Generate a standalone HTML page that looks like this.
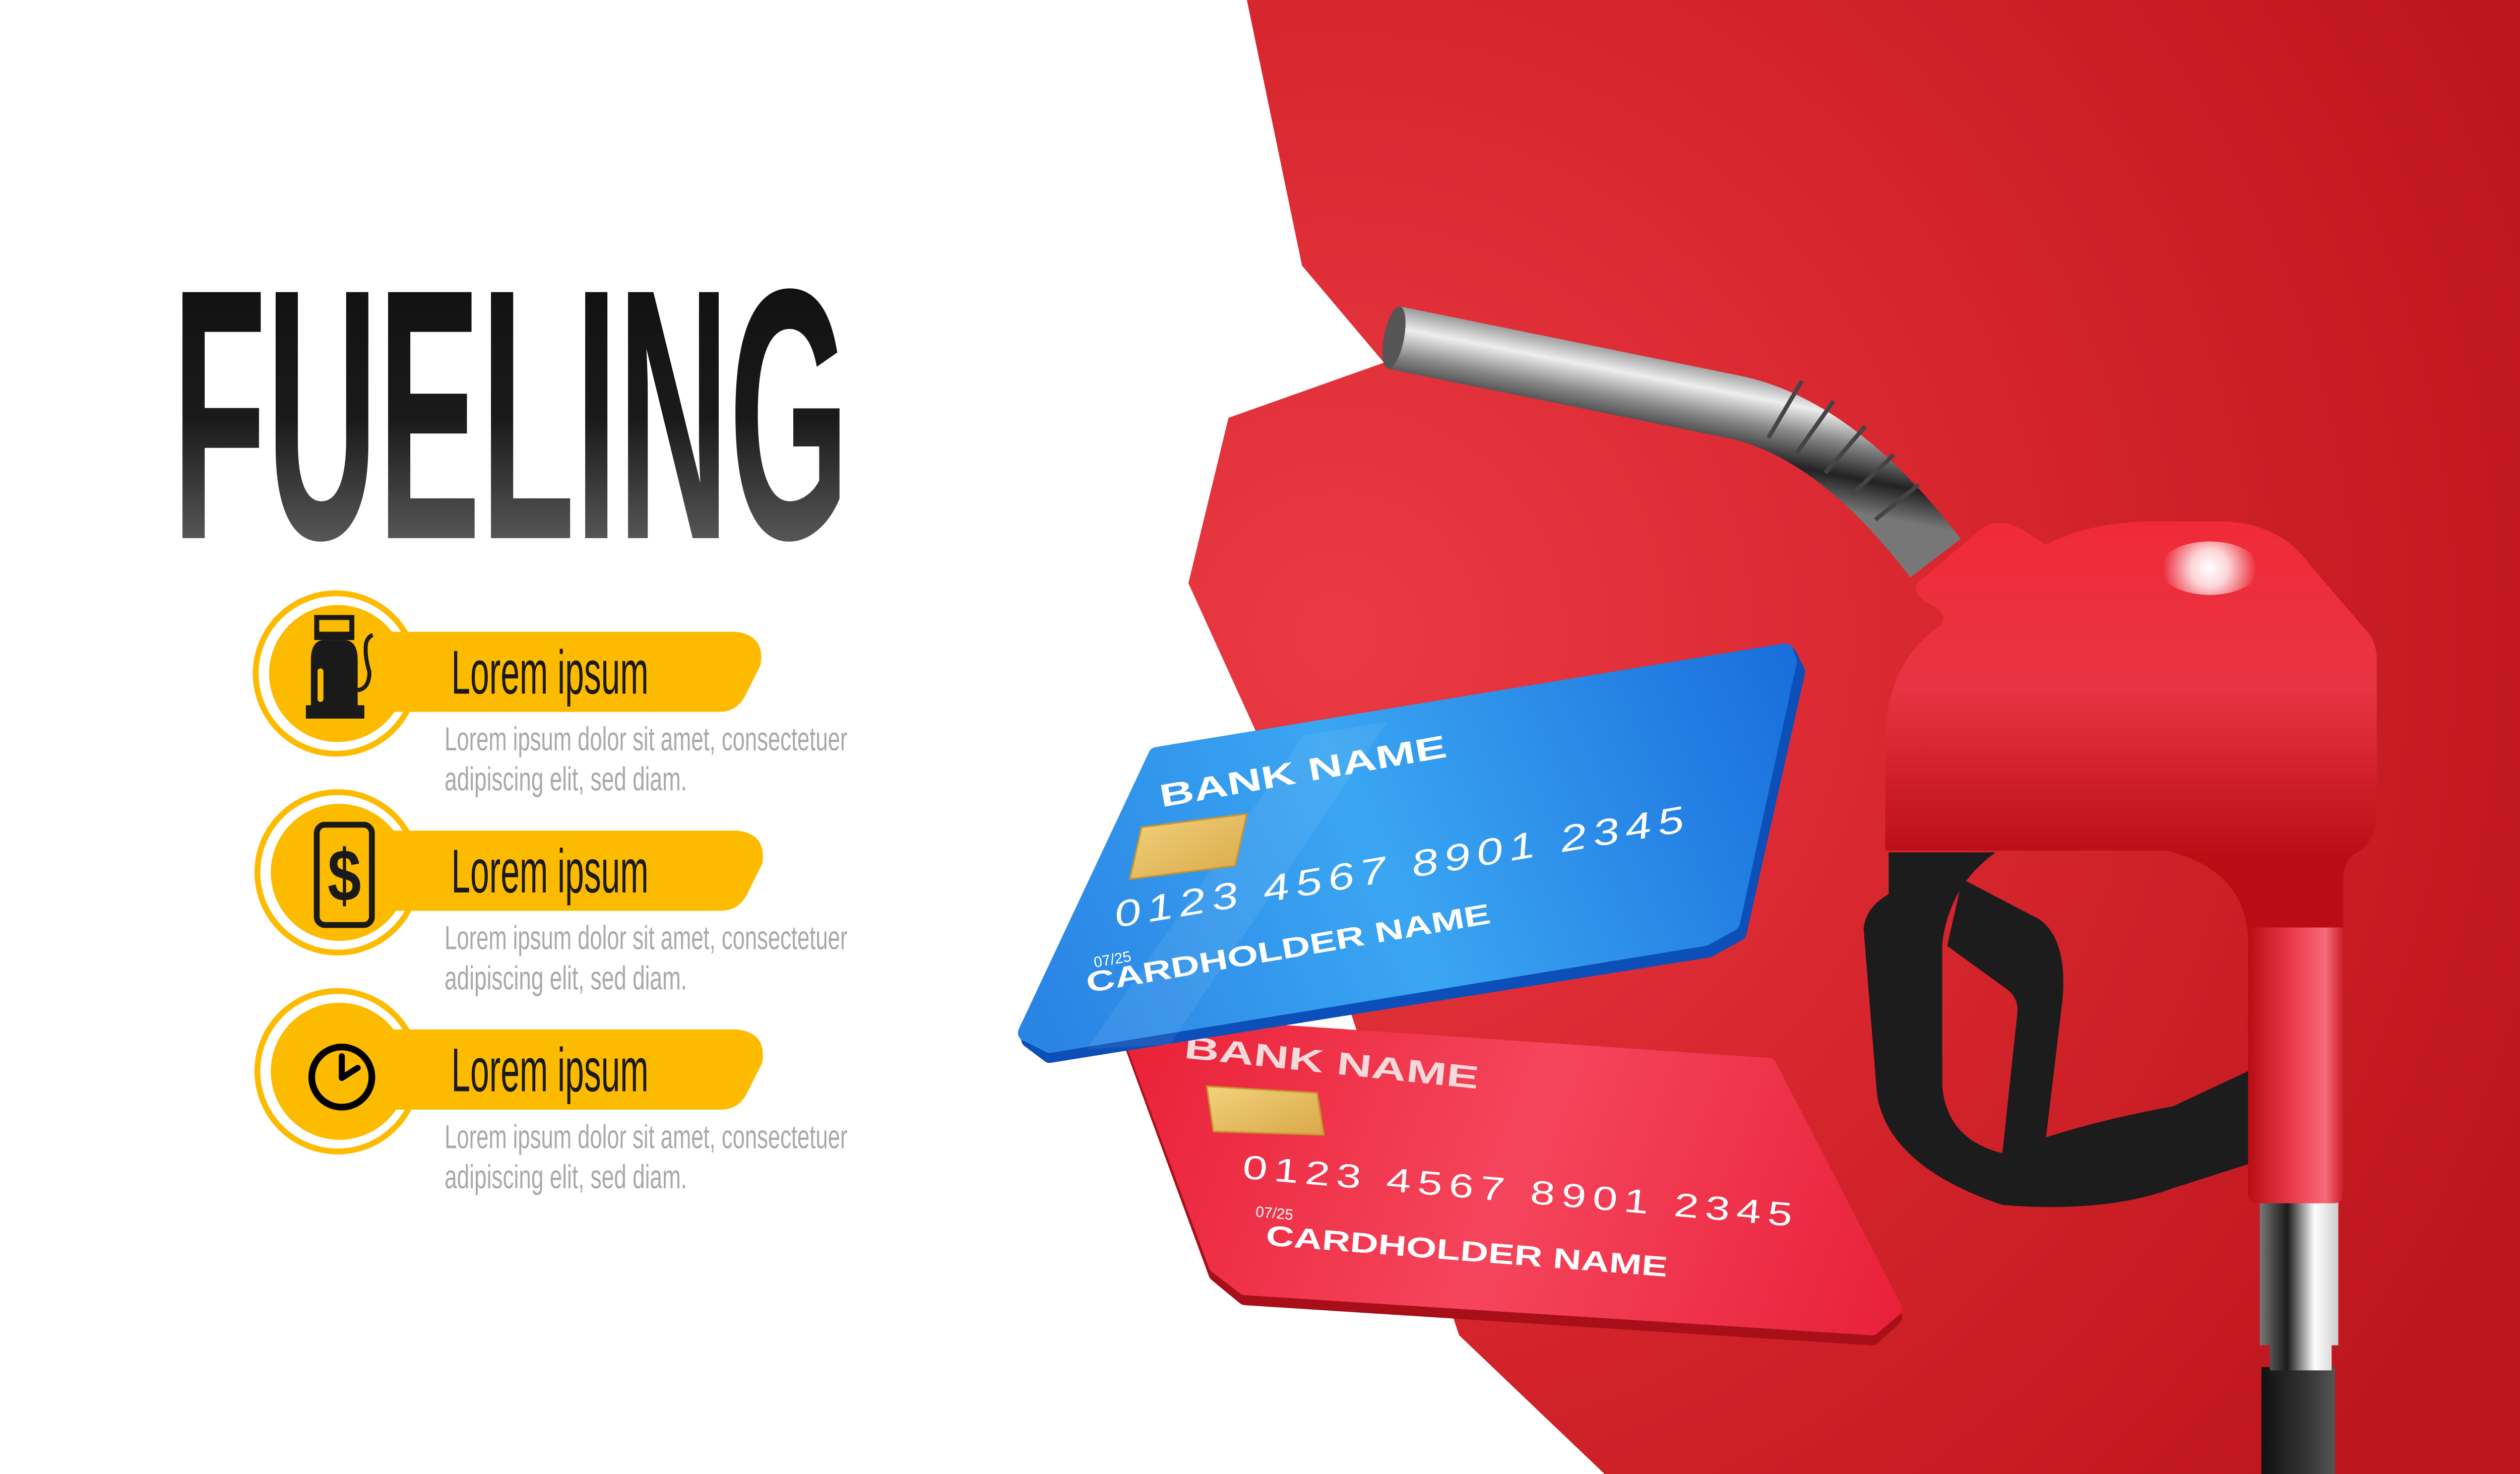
<!DOCTYPE html>
<html><head><meta charset="utf-8">
<style>html,body{margin:0;padding:0;background:#fff;overflow:hidden}svg{display:block}</style>
</head><body>
<svg width="5200" height="2925" viewBox="0 0 1568 882" preserveAspectRatio="none" xmlns="http://www.w3.org/2000/svg">
<defs>
<radialGradient id="bg" cx="800" cy="380" r="780" gradientUnits="userSpaceOnUse">
<stop offset="0" stop-color="#ea3a44"/><stop offset="0.5" stop-color="#d6252d"/><stop offset="1" stop-color="#bc161c"/></radialGradient>
<linearGradient id="title" x1="0" y1="165" x2="0" y2="322" gradientUnits="userSpaceOnUse">
<stop offset="0" stop-color="#111"/><stop offset="0.55" stop-color="#1a1a1a"/><stop offset="1" stop-color="#555"/></linearGradient>
<linearGradient id="blue" x1="620" y1="600" x2="1070" y2="400" gradientUnits="userSpaceOnUse">
<stop offset="0" stop-color="#2a84e4"/><stop offset="0.45" stop-color="#3aa6f2"/><stop offset="1" stop-color="#1a6fdc"/></linearGradient>
<linearGradient id="redc" x1="680" y1="620" x2="1130" y2="790" gradientUnits="userSpaceOnUse">
<stop offset="0" stop-color="#e92238"/><stop offset="0.5" stop-color="#f5455c"/><stop offset="1" stop-color="#e8223a"/></linearGradient>
<linearGradient id="pipe" x1="0" y1="185" x2="0" y2="265" gradientUnits="userSpaceOnUse" gradientTransform="rotate(11 900 220)">
<stop offset="0" stop-color="#555"/><stop offset="0.3" stop-color="#eee"/><stop offset="0.5" stop-color="#888"/><stop offset="0.75" stop-color="#222"/><stop offset="1" stop-color="#777"/></linearGradient>
<linearGradient id="body" x1="0" y1="310" x2="0" y2="515" gradientUnits="userSpaceOnUse">
<stop offset="0" stop-color="#f02a38"/><stop offset="0.5" stop-color="#e83442"/><stop offset="1" stop-color="#b80d14"/></linearGradient>
<linearGradient id="neck" x1="1345" y1="0" x2="1403" y2="0" gradientUnits="userSpaceOnUse">
<stop offset="0" stop-color="#b80d14"/><stop offset="0.5" stop-color="#ee4050"/><stop offset="0.8" stop-color="#f46a78"/><stop offset="1" stop-color="#c81520"/></linearGradient>
<linearGradient id="metal" x1="1352" y1="0" x2="1399" y2="0" gradientUnits="userSpaceOnUse">
<stop offset="0" stop-color="#777"/><stop offset="0.35" stop-color="#1a1a1a"/><stop offset="0.7" stop-color="#fff"/><stop offset="1" stop-color="#ccc"/></linearGradient>
<linearGradient id="hose" x1="1353" y1="0" x2="1397" y2="0" gradientUnits="userSpaceOnUse">
<stop offset="0" stop-color="#111"/><stop offset="0.6" stop-color="#333"/><stop offset="1" stop-color="#555"/></linearGradient>
<radialGradient id="hl" cx="1322" cy="340" r="28" gradientUnits="userSpaceOnUse">
<stop offset="0" stop-color="#fff"/><stop offset="0.4" stop-color="#fff" stop-opacity="0.8"/><stop offset="1" stop-color="#fff" stop-opacity="0"/></radialGradient>
<linearGradient id="chip" x1="0" y1="0" x2="1" y2="1"><stop offset="0" stop-color="#f2d27a"/><stop offset="1" stop-color="#d9a84a"/></linearGradient>
</defs>

<!-- red background -->
<polygon points="746,0 1568,0 1568,882 960,882 873,799 752,439 711,349 735,250 828,217 779,159" fill="url(#bg)"/>

<!-- title -->
<text x="103" y="322" font-family="Liberation Sans, sans-serif" font-weight="bold" font-size="214" textLength="405" lengthAdjust="spacingAndGlyphs" fill="url(#title)">FUELING</text>

<!-- items -->
<g font-family="Liberation Sans Narrow, Liberation Sans, sans-serif">
<g>
<circle cx="201" cy="403" r="48" fill="none" stroke="#fdbb00" stroke-width="3.5"/>
<path d="M228,378 H440 Q458,380 455,398 L446,416 Q441,426 430,426 H228 Z" fill="#fdbb00"/>
<circle cx="202" cy="403" r="41" fill="#fdbb00"/>
<rect x="188" y="368" width="24" height="15" fill="#1a1a1a"/><rect x="191" y="371" width="18" height="7" fill="#fdbb00"/>
<path d="M186,422 V395 Q186,384 193,383 H207 Q214,384 214,395 V422 Z" fill="#1a1a1a"/>
<rect x="183" y="422" width="35" height="8" fill="#1a1a1a"/>
<rect x="190" y="400" width="3.5" height="20" rx="1.7" fill="#fdbb00"/>
<path d="M214,413 Q221,412 221,402 Q218,392 219,385 Q220,381 223,380" fill="none" stroke="#1a1a1a" stroke-width="2.4"/>
<text x="270" y="415" font-size="37" textLength="118" lengthAdjust="spacingAndGlyphs" fill="#1a1a1a">Lorem ipsum</text>
<text x="266" y="449" font-size="20" textLength="241" lengthAdjust="spacingAndGlyphs" fill="#a9a9a9">Lorem ipsum dolor sit amet, consectetuer</text>
<text x="266" y="473" font-size="20" textLength="145" lengthAdjust="spacingAndGlyphs" fill="#a9a9a9">adipiscing elit, sed diam.</text>
</g>
<g transform="translate(1,119)">
<circle cx="201" cy="403" r="48" fill="none" stroke="#fdbb00" stroke-width="3.5"/>
<path d="M228,378 H440 Q458,380 455,398 L446,416 Q441,426 430,426 H228 Z" fill="#fdbb00"/>
<circle cx="202" cy="403" r="41" fill="#fdbb00"/>
<rect x="188.5" y="374.5" width="33" height="60" rx="5" fill="none" stroke="#1a1a1a" stroke-width="3.5"/>
<text x="205" y="420" font-family="Liberation Sans, sans-serif" font-weight="bold" font-size="44" text-anchor="middle" textLength="20" lengthAdjust="spacingAndGlyphs" fill="#1a1a1a">$</text>
<text x="269" y="415" font-size="37" textLength="118" lengthAdjust="spacingAndGlyphs" fill="#1a1a1a">Lorem ipsum</text>
<text x="265" y="449" font-size="20" textLength="241" lengthAdjust="spacingAndGlyphs" fill="#a9a9a9">Lorem ipsum dolor sit amet, consectetuer</text>
<text x="265" y="473" font-size="20" textLength="145" lengthAdjust="spacingAndGlyphs" fill="#a9a9a9">adipiscing elit, sed diam.</text>
</g>
<g transform="translate(1,238)">
<circle cx="201" cy="403" r="48" fill="none" stroke="#fdbb00" stroke-width="3.5"/>
<path d="M228,378 H440 Q458,380 455,398 L446,416 Q441,426 430,426 H228 Z" fill="#fdbb00"/>
<circle cx="202" cy="403" r="41" fill="#fdbb00"/>
<circle cx="203.5" cy="406.5" r="18" fill="none" stroke="#000" stroke-width="4"/>
<path d="M203.5,394 V407 L213,401" fill="none" stroke="#000" stroke-width="3.6" stroke-linecap="round" stroke-linejoin="round"/>
<text x="269" y="415" font-size="37" textLength="118" lengthAdjust="spacingAndGlyphs" fill="#1a1a1a">Lorem ipsum</text>
<text x="265" y="449" font-size="20" textLength="241" lengthAdjust="spacingAndGlyphs" fill="#a9a9a9">Lorem ipsum dolor sit amet, consectetuer</text>
<text x="265" y="473" font-size="20" textLength="145" lengthAdjust="spacingAndGlyphs" fill="#a9a9a9">adipiscing elit, sed diam.</text>
</g>
</g>

<!-- pipe -->
<path d="M834,202 L1040,244 Q1100,258 1158,334" fill="none" stroke="url(#pipe)" stroke-width="38"/>
<ellipse cx="834" cy="202" rx="6" ry="19" transform="rotate(11 834 202)" fill="#555"/>
<g stroke="#444" stroke-width="2.5" fill="none">
<path d="M1058,262 L1078,228"/><path d="M1075,271 L1097,240"/><path d="M1092,283 L1116,255"/><path d="M1108,296 L1133,272"/><path d="M1122,311 L1148,290"/>
</g>

<!-- red card -->
<polygon points="674,615 1058,641 1133,788 1120,800 745,776 728,762" fill="#a80f18" stroke="#a80f18" stroke-width="10" stroke-linejoin="round"/>
<polygon points="674,612 1058,638 1133,783 1120,794 745,770 728,757" fill="url(#redc)" stroke="url(#redc)" stroke-width="10" stroke-linejoin="round"/>
<polygon points="722,650 788,654 792,679 726,677" fill="url(#chip)" stroke="#c99630" stroke-width="1"/>
<g font-family="Liberation Sans, sans-serif" font-weight="bold" fill="#fff">
<text x="708" y="633" font-size="19" textLength="177" lengthAdjust="spacingAndGlyphs" transform="rotate(6 708 633)" fill="#f4dada">BANK NAME</text>
<text x="743" y="705" font-size="20" textLength="334" lengthAdjust="spacingAndGlyphs" transform="rotate(5 743 705)" font-weight="normal" letter-spacing="3">0123 4567 8901 2345</text>
<text x="751" y="728" font-size="9" transform="rotate(5 751 728)" font-weight="normal">07/25</text>
<text x="757" y="745" font-size="17" textLength="241" lengthAdjust="spacingAndGlyphs" transform="rotate(4.5 757 745)">CARDHOLDER NAME</text>
</g>

<!-- blue card -->
<polygon points="624,636 1030,568 1073,402 1072,392" fill="#000" opacity="0.12"/>
<polygon points="692,455 1070,392 1075,402 1040,558 1022,568 628,631 616,622" fill="#0c4fb8" stroke="#0c4fb8" stroke-width="10" stroke-linejoin="round"/>
<polygon points="692,452 1068,390 1070,396 1036,552 1020,561 628,625 614,618" fill="url(#blue)" stroke="url(#blue)" stroke-width="10" stroke-linejoin="round"/>
<polygon points="780,440 830,432 700,625 650,628" fill="#fff" opacity="0.07"/>
<polygon points="683,495 746,487 739,518 676,526" fill="url(#chip)" stroke="#c99630" stroke-width="1"/>
<g font-family="Liberation Sans, sans-serif" font-weight="bold" fill="#fff">
<text x="695" y="483" font-size="19" textLength="174" lengthAdjust="spacingAndGlyphs" transform="rotate(-10 695 483)">BANK NAME</text>
<text x="668" y="555" font-size="22" textLength="349" lengthAdjust="spacingAndGlyphs" transform="rotate(-9.6 668 555)" font-weight="normal" font-style="italic" letter-spacing="3">0123 4567 8901 2345</text>
<text x="655" y="579" font-size="9" transform="rotate(-10 655 579)" font-weight="normal">07/25</text>
<text x="651" y="594" font-size="17" textLength="245" lengthAdjust="spacingAndGlyphs" transform="rotate(-9.8 651 594)">CARDHOLDER NAME</text>
</g>

<!-- nozzle -->
<rect x="1353" y="818" width="44" height="70" fill="url(#hose)"/>
<rect x="1358" y="800" width="37" height="20" fill="url(#metal)"/>
<rect x="1352" y="719" width="47" height="86" fill="url(#metal)"/>
<path d="M1130,510 L1130,535 Q1116,543 1115,556 L1123,655 Q1130,698 1198,721 Q1260,726 1300,711 L1347,696 L1347,640 L1300,662 Q1240,673 1198,690 Q1165,682 1162,650 L1162,565 Q1166,530 1194,510 Z" fill="#1c1c1c"/>
<path d="M1174,526 L1220,550 Q1237,562 1234,598 L1223,690 L1198,690 L1207,606 Q1208,596 1198,590 L1165,566 Z" fill="#1c1c1c"/>
<path d="M1128,509 L1128,440 Q1130,395 1160,375 Q1168,368 1152,360 Q1143,354 1148,348 L1186,316 Q1197,309 1212,318 L1224,326 Q1250,312 1290,312 L1332,312 Q1365,314 1382,338 L1418,380 Q1422,386 1422,395 L1422,490 Q1420,505 1410,510 Q1402,515 1402,525 L1402,560 L1345,560 Q1342,520 1296,509 Z" fill="url(#body)"/>
<path d="M1345,555 L1402,555 L1402,714 Q1402,720 1396,720 L1351,720 Q1345,720 1345,714 Z" fill="url(#neck)"/>
<ellipse cx="1322" cy="340" rx="30" ry="16" fill="url(#hl)"/>
</svg>
</body></html>
